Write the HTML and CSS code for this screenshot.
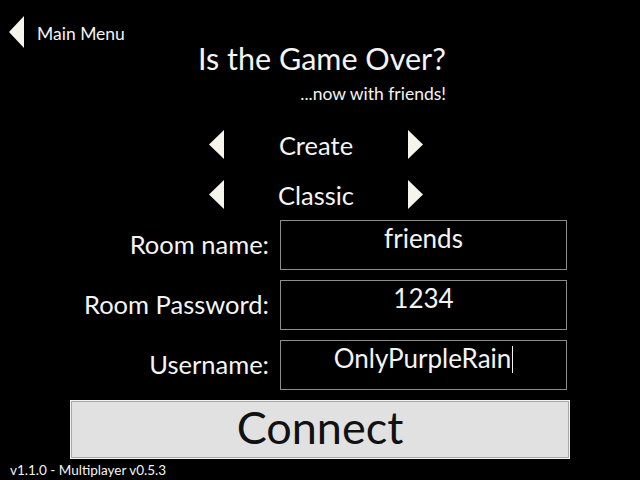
FILE: index.html
```html
<!DOCTYPE html>
<html>
<head>
<meta charset="utf-8">
<link rel="stylesheet" href="styles.css">
</head>
<body>
<div class="screen">
  <div class="topbar">
    <svg class="arrow back" width="15" height="32" viewBox="0 0 15 32"><polygon points="15,0 15,32 0,16" /></svg>
    <span class="back-label">Main Menu</span>
  </div>
  <div class="titles">
    <h1 class="title">Is the Game Over?</h1>
    <p class="subtitle">...now with friends!</p>
  </div>
  <div class="selector sel-mode">
    <svg class="arrow" width="15" height="29" viewBox="0 0 15 29"><polygon points="15,0 15,29 0,14.5" /></svg>
    <span class="sel-value">Create</span>
    <svg class="arrow" width="15" height="29" viewBox="0 0 15 29"><polygon points="0,0 0,29 15,14.5" /></svg>
  </div>
  <div class="selector sel-type">
    <svg class="arrow" width="15" height="29" viewBox="0 0 15 29"><polygon points="15,0 15,29 0,14.5" /></svg>
    <span class="sel-value">Classic</span>
    <svg class="arrow" width="15" height="29" viewBox="0 0 15 29"><polygon points="0,0 0,29 15,14.5" /></svg>
  </div>
  <div class="form">
    <label class="label">Room name:</label>
    <div class="field">friends</div>
    <label class="label">Room Password:</label>
    <div class="field">1234</div>
    <label class="label">Username:</label>
    <div class="field">OnlyPurpleRain<span class="caret"></span></div>
  </div>
  <div class="connect-row">
    <button class="connect">Connect</button>
  </div>
  <div class="version">v1.1.0 - Multiplayer v0.5.3</div>
</div>
</body>
</html>
```
FILE: styles.css
```css
html, body {
  margin: 0;
  padding: 0;
  background: #000;
}
body {
  font-family: Lato, "Open Sans", sans-serif;
  color: #f4f4f4;
}
.screen {
  width: 640px;
  height: 480px;
  overflow: hidden;
  padding-top: 16px;
  box-sizing: border-box;
}
.arrow {
  display: block;
  fill: #f7f4ec;
}
.topbar {
  display: flex;
  align-items: center;
  height: 32px;
  padding-left: 9px;
}
.back-label {
  margin-left: 13px;
  font-size: 17.5px;
  line-height: 20px;
  padding-top: 3px;
}
.titles {
  width: 248px;
  margin-left: 198px;
}
.title {
  margin: -1px 0 0 0;
  font-weight: normal;
  font-size: 30.5px;
  line-height: 22px;
  white-space: nowrap;
  text-align: left;
}
.subtitle {
  margin: 17px 0 0 0;
  font-size: 17.5px;
  line-height: 16px;
  text-align: right;
  white-space: nowrap;
}
.selector {
  display: grid;
  grid-template-columns: 15px 184px 15px;
  align-items: center;
  justify-content: center;
  padding-right: 8px;
  height: 28px;
}
.sel-mode {
  margin-top: 28px;
}
.sel-type {
  margin-top: 22px;
}
.sel-value {
  font-size: 25.5px;
  line-height: 28px;
  text-align: center;
}
.form {
  display: grid;
  grid-template-columns: 270px 287px;
  column-gap: 10px;
  row-gap: 10px;
  margin-top: 12px;
}
.label {
  text-align: right;
  font-size: 25.5px;
  line-height: 28px;
  padding-top: 10px;
  padding-right: 1px;
  white-space: nowrap;
}
.field {
  height: 50px;
  box-sizing: border-box;
  border: 1px solid #8c8c8c;
  text-align: center;
  font-size: 26px;
  line-height: 31px;
  padding-top: 2px;
}
.caret {
  display: inline-block;
  width: 1px;
  height: 27px;
  background: #f4f4f4;
  vertical-align: -5px;
  margin-left: 1px;
}
.connect-row {
  padding-left: 70px;
  margin-top: 10px;
}
.connect {
  display: flex;
  align-items: center;
  justify-content: center;
  width: 500px;
  height: 59px;
  margin: 0;
  padding: 0 0 6px 0;
  box-sizing: border-box;
  background: #e1e1e1;
  border: 1px solid #f2f2f2;
  box-shadow: inset 0 0 0 1px #a8a8a8;
  font-family: Lato, "Open Sans", sans-serif;
  font-size: 45px;
  line-height: 48px;
  color: #111;
}
.version {
  margin-top: 3px;
  padding-left: 10px;
  font-size: 13.5px;
  line-height: 16px;
}
```
